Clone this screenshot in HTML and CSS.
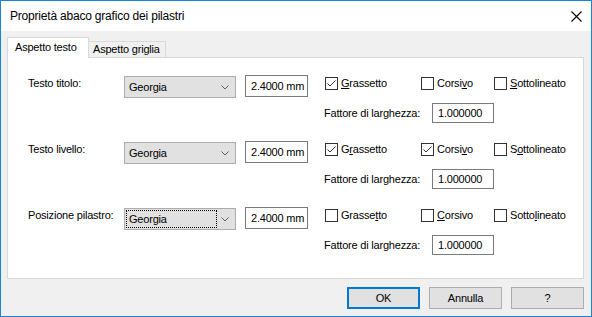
FILE: index.html
```html
<!DOCTYPE html>
<html lang="it">

<head>
    <meta charset="UTF-8">
    <title>Proprietà abaco grafico dei pilastri</title>
    <link rel="stylesheet" href="styles.css">
</head>

<body>

    <div class="window">
        <div class="titlebar">
            <span class="title">Proprietà abaco grafico dei pilastri</span>
            <svg class="close" width="11" height="11" viewBox="0 0 11 11">
                <path d="M0.5 0.5 L10.5 10.5 M10.5 0.5 L0.5 10.5" stroke="#000" stroke-width="1.1" fill="none"/>
            </svg>
        </div>

        <div class="content">
            <div class="tabs">
                <div class="tab active">Aspetto testo</div>
                <div class="tab">Aspetto griglia</div>
            </div>

            <div class="panel">
                <!-- Testo titolo -->
                <div class="row">
                    <div class="label">Testo titolo:</div>
                    <div class="combo">
                        <span class="combo-text">Georgia</span>
                        <svg class="chevron" width="8" height="5" viewBox="0 0 8 5"><polyline points="0.5,0.5 4,4 7.5,0.5" fill="none" stroke="#606060"/></svg>
                    </div>
                    <div class="field size">2.4000 mm</div>
                    <div class="opts">
                        <div class="checks">
                            <div class="check bold"><span class="box on"><svg width="11" height="11" viewBox="0 0 11 11"><polyline points="1.5,5.5 4,8 9.5,2.5" fill="none" stroke="#333"/></svg></span><span><u>G</u>rassetto</span></div>
                            <div class="check italic"><span class="box"></span><span>Corsi<u>v</u>o</span></div>
                            <div class="check"><span class="box"></span><span><u>S</u>ottolineato</span></div>
                        </div>
                        <div class="factor">
                            <span class="factor-label">Fattore di larghezza:</span>
                            <div class="field width">1.000000</div>
                        </div>
                    </div>
                </div>

                <!-- Testo livello -->
                <div class="row">
                    <div class="label">Testo livello:</div>
                    <div class="combo">
                        <span class="combo-text">Georgia</span>
                        <svg class="chevron" width="8" height="5" viewBox="0 0 8 5"><polyline points="0.5,0.5 4,4 7.5,0.5" fill="none" stroke="#606060"/></svg>
                    </div>
                    <div class="field size">2.4000 mm</div>
                    <div class="opts">
                        <div class="checks">
                            <div class="check bold"><span class="box on"><svg width="11" height="11" viewBox="0 0 11 11"><polyline points="1.5,5.5 4,8 9.5,2.5" fill="none" stroke="#333"/></svg></span><span>G<u>r</u>assetto</span></div>
                            <div class="check italic"><span class="box on"><svg width="11" height="11" viewBox="0 0 11 11"><polyline points="1.5,5.5 4,8 9.5,2.5" fill="none" stroke="#333"/></svg></span><span>Corsi<u>v</u>o</span></div>
                            <div class="check"><span class="box"></span><span>S<u>o</u>ttolineato</span></div>
                        </div>
                        <div class="factor">
                            <span class="factor-label">Fattore di larghezza:</span>
                            <div class="field width">1.000000</div>
                        </div>
                    </div>
                </div>

                <!-- Posizione pilastro -->
                <div class="row">
                    <div class="label">Posizione pilastro:</div>
                    <div class="combo">
                        <span class="combo-text focus">Georgia</span>
                        <svg class="chevron" width="8" height="5" viewBox="0 0 8 5"><polyline points="0.5,0.5 4,4 7.5,0.5" fill="none" stroke="#606060"/></svg>
                    </div>
                    <div class="field size">2.4000 mm</div>
                    <div class="opts">
                        <div class="checks">
                            <div class="check bold"><span class="box"></span><span>Grasse<u>t</u>to</span></div>
                            <div class="check italic"><span class="box"></span><span><u>C</u>orsivo</span></div>
                            <div class="check"><span class="box"></span><span>Sotto<u>l</u>ineato</span></div>
                        </div>
                        <div class="factor">
                            <span class="factor-label">Fattore di larghezza:</span>
                            <div class="field width">1.000000</div>
                        </div>
                    </div>
                </div>
            </div>

            <div class="buttons">
                <button class="default">OK</button>
                <button>Annulla</button>
                <button>?</button>
            </div>
        </div>
    </div>

</body>

</html>
```

FILE: styles.css
```css
body {
    margin: 0;
    font-family: 'Liberation Sans', Arial, sans-serif;
    font-size: 11px;
    letter-spacing: -0.2px;
    color: #000;
}

.window {
    width: 592px;
    height: 317px;
    box-sizing: border-box;
    border: 1px solid #1883d7;
    background-color: #f0f0f0;
    display: flex;
    flex-direction: column;
}

.titlebar {
    height: 30px;
    flex: 0 0 30px;
    background-color: #fff;
    display: flex;
    align-items: center;
    justify-content: space-between;
    padding: 0 9px;
    font-size: 12px;
}

.close {
    display: block;
}

.content {
    padding: 6px 7px 0 6px;
}

.tabs {
    display: flex;
    align-items: flex-end;
    height: 20px;
}

.tab {
    box-sizing: border-box;
    height: 16px;
    width: 77px;
    border: 1px solid #d9d9d9;
    border-left: none;
    border-bottom: none;
    padding: 1px 0 0 4px;
    line-height: 13px;
}

.tab.active {
    position: relative;
    z-index: 1;
    height: 21px;
    width: 82px;
    margin-bottom: -1px;
    border-left: 1px solid #d9d9d9;
    background-color: #fff;
    padding: 3px 0 0 7px;
}

.panel {
    box-sizing: border-box;
    height: 222px;
    background-color: #fff;
    border: 1px solid #d9d9d9;
    padding: 17px 0 0 20px;
}

.row {
    display: flex;
    height: 66px;
}

.label {
    width: 96px;
    padding-top: 2px;
    line-height: 13px;
}

.combo {
    box-sizing: border-box;
    width: 112px;
    height: 22px;
    margin-top: 1px;
    padding: 1px;
    border: 1px solid #adadad;
    background-color: #e1e1e1;
    display: flex;
    align-items: center;
}

.combo-text {
    box-sizing: border-box;
    width: 91px;
    height: 18px;
    padding: 2px 0 0 2px;
    line-height: 13px;
    border: 1px solid transparent;
}

.combo-text.focus {
    border: 1px dotted #000;
}

.chevron {
    display: block;
    margin-left: auto;
    margin-right: 5px;
}

.field {
    box-sizing: border-box;
    border: 1px solid #7a7a7a;
    background-color: #fff;
    padding-left: 5px;
    line-height: 18px;
}

.size {
    width: 63px;
    height: 22px;
    margin-left: 9px;
    line-height: 20px;
}

.opts {
    margin-left: 17px;
}

.checks {
    display: flex;
    align-items: flex-start;
    height: 22px;
    padding-top: 2px;
    box-sizing: border-box;
}

.check {
    display: flex;
    align-items: center;
    width: 73px;
    line-height: 13px;
}

.check.italic {
    width: 73px;
}

.check.bold {
    width: 96px;
}

.box {
    box-sizing: border-box;
    width: 13px;
    height: 13px;
    border: 1px solid #333;
    background-color: #fff;
    margin-right: 3px;
}

.box svg {
    display: block;
}

.factor {
    display: flex;
    align-items: center;
    margin-top: 6px;
    margin-left: -1px;
}

.factor-label {
    width: 108px;
}

.width {
    width: 62px;
    height: 20px;
}

.buttons {
    display: flex;
    justify-content: flex-end;
    gap: 9px;
    margin-top: 8px;
}

button {
    box-sizing: border-box;
    width: 73px;
    height: 22px;
    border: 1px solid #adadad;
    background-color: #e1e1e1;
    font-family: 'Liberation Sans', Arial, sans-serif;
    font-size: 11px;
    letter-spacing: -0.2px;
    color: #000;
    padding: 0;
}

button.default {
    border: 2px solid #0078d7;
}
```
